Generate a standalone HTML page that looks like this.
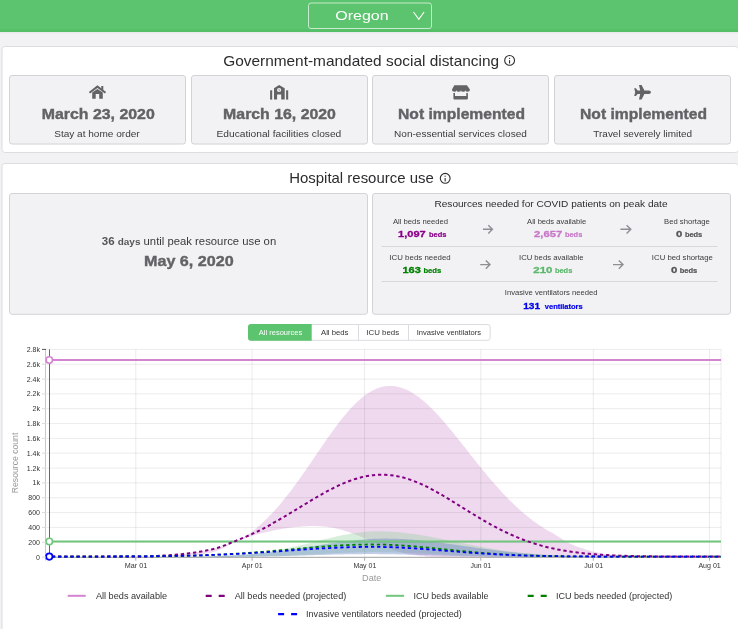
<!DOCTYPE html>
<html><head><meta charset="utf-8">
<style>
html,body{margin:0;padding:0;}
body{width:738px;height:629px;overflow:hidden;background:#f2f2f5;font-family:"Liberation Sans",sans-serif;position:relative;}
svg{position:absolute;left:0;top:0;will-change:transform;}
text{font-family:"Liberation Sans",sans-serif;}
.yt{font-size:7px;fill:#333;}
.xt{font-size:7px;fill:#333;}
.al{font-size:8.5px;fill:#999;}
.lg{font-size:9px;fill:#333;}
</style></head>
<body>
<svg width="738" height="629" viewBox="0 0 738 629">
<defs><filter id="sb" x="-5%" y="-5%" width="110%" height="110%"><feGaussianBlur stdDeviation="0.7"/></filter></defs>
<!-- header -->
<rect x="0" y="0" width="738" height="32" fill="#5cc36f"/>
<rect x="0" y="29.6" width="738" height="2.4" fill="#55bf68"/>
<rect x="0" y="32" width="738" height="1.5" fill="#000" fill-opacity="0.035"/>
<rect x="308.5" y="3" width="123" height="25.5" rx="2.5" fill="none" stroke="#c6ebcc" stroke-width="1"/>
<path d="M413.5,12 L418.8,19.3 L424.1,12" fill="none" stroke="#fff" stroke-width="1.1"/>

<!-- card 1 -->
<rect x="2" y="46.5" width="736.5" height="106" rx="3" fill="#fff" stroke="none"/><rect x="2" y="46.5" width="736.5" height="106" rx="3" fill="none" stroke="#dcdce1" filter="url(#sb)" stroke-width="1"/>
<g id="info1"><circle cx="509.6" cy="60.4" r="4.9" fill="none" stroke="#2c2c2e" stroke-width="1.1"/>
<rect x="509.0" y="60.2" width="1.1" height="3.3" fill="#2c2c2e"/><circle cx="509.55" cy="58.3" r="0.65" fill="#2c2c2e"/></g>

<rect x="9.5" y="75.5" width="176" height="68.5" rx="2.5" fill="#f2f2f5" stroke="none"/><rect x="9.5" y="75.5" width="176" height="68.5" rx="2.5" fill="none" stroke="#d2d2d7" filter="url(#sb)"/>
<rect x="191.5" y="75.5" width="176" height="68.5" rx="2.5" fill="#f2f2f5" stroke="none"/><rect x="191.5" y="75.5" width="176" height="68.5" rx="2.5" fill="none" stroke="#d2d2d7" filter="url(#sb)"/>
<rect x="372.5" y="75.5" width="176" height="68.5" rx="2.5" fill="#f2f2f5" stroke="none"/><rect x="372.5" y="75.5" width="176" height="68.5" rx="2.5" fill="none" stroke="#d2d2d7" filter="url(#sb)"/>
<rect x="554.5" y="75.5" width="176" height="68.5" rx="2.5" fill="#f2f2f5" stroke="none"/><rect x="554.5" y="75.5" width="176" height="68.5" rx="2.5" fill="none" stroke="#d2d2d7" filter="url(#sb)"/>


<!-- card 2 -->
<rect x="2" y="163.5" width="736.5" height="480" rx="3" fill="#fff" stroke="none"/><rect x="2" y="163.5" width="736.5" height="480" rx="3" fill="none" stroke="#dcdce1" filter="url(#sb)" stroke-width="1"/>
<g><circle cx="445.2" cy="178.3" r="4.9" fill="none" stroke="#2c2c2e" stroke-width="1.1"/>
<rect x="444.6" y="178.1" width="1.1" height="3.3" fill="#2c2c2e"/><circle cx="445.15" cy="176.2" r="0.65" fill="#2c2c2e"/></g>

<rect x="9.5" y="193.5" width="358" height="120.8" rx="2.5" fill="#f2f2f5" stroke="none"/><rect x="9.5" y="193.5" width="358" height="120.8" rx="2.5" fill="none" stroke="#d2d2d7" filter="url(#sb)"/>
<rect x="372.5" y="193.5" width="358" height="120.8" rx="2.5" fill="#f2f2f5" stroke="none"/><rect x="372.5" y="193.5" width="358" height="120.8" rx="2.5" fill="none" stroke="#d2d2d7" filter="url(#sb)"/>


<line x1="381.5" y1="246.5" x2="717.5" y2="246.5" stroke="#d8d8dc"/>
<line x1="381.5" y1="281.5" x2="717.5" y2="281.5" stroke="#d8d8dc"/>


<!-- icons -->
<g fill="#636366">
<path d="M89.5,92.7 L97.4,86.6 L105.5,92.7" fill="none" stroke="#636366" stroke-width="2"/>
<rect x="101.3" y="86" width="2" height="3.8"/>
<path d="M92.2,92.6 L97.4,89.0 L102.8,92.6 L102.8,98.7 L99.2,98.7 L99.2,94 L95.7,94 L95.7,98.7 L92.2,98.7 Z"/>
<rect x="270.1" y="90.3" width="2.1" height="9.3"/>
<rect x="286.1" y="90.3" width="2.1" height="9.3"/>
<path d="M274,88.2 L279.1,85.1 L284.7,88.2 L284.7,99.6 L281.2,99.6 L281.2,94.5 L277.1,94.5 L277.1,99.6 L274,99.6 Z"/>
<circle cx="279.1" cy="90" r="2.1" fill="#f2f2f5"/>
<path d="M279,88.9 L279,90.2 L279.8,90.8" fill="none" stroke="#636366" stroke-width="0.6"/>
<path d="M454.3,85.2 L466.9,85.2 L469.9,89.6 L469.9,90.0 Q469.9,91.7 467.65,91.7 Q465.4,91.7 465.4,90.2 Q465.4,91.7 463.17,91.7 Q460.95,91.7 460.95,90.2 Q460.95,91.7 458.72,91.7 Q456.5,91.7 456.5,90.2 Q456.5,91.7 454.25,91.7 Q452,91.7 452,90.0 L452,89.6 Z"/>
<path d="M453.4,93.1 L455,93.1 L455,96.1 L466.3,96.1 L466.3,93.1 L467.9,93.1 L467.9,98.6 Q467.9,99.4 467.1,99.4 L454.2,99.4 Q453.4,99.4 453.4,98.6 Z"/>
<path d="M651,92.2 Q650.7,90.5 649,90.5 L644.4,90.5 L641.6,85.0 L639.0,85.0 L640.2,90.5 L637.6,90.5 L635.9,88.3 L634.2,88.3 L635.2,92.2 L634.2,96.1 L635.9,96.1 L637.6,93.9 L640.2,93.9 L639.0,99.4 L641.6,99.4 L644.4,93.9 L649,93.9 Q650.7,93.9 651,92.2 Z"/>
</g>

<!-- right box content -->
<g fill="none" stroke="#8e8e93" stroke-width="1.4">
<path d="M483,229.3 L492.3,229.3 M488.3,225.2 L492.4,229.3 L488.3,233.4"/>
<path d="M620.4,229.3 L630.7,229.3 M626.6,225.2 L630.8,229.3 L626.6,233.4"/>
<path d="M480.2,264.6 L489.9,264.6 M485.8,260.5 L490,264.6 L485.8,268.7"/>
<path d="M613,264.6 L622.9,264.6 M618.8,260.5 L623,264.6 L618.8,268.7"/>
</g>

<!-- button group -->
<rect x="248.5" y="324.5" width="241.7" height="15.8" rx="2.5" fill="#fff" stroke="#dcdce0"/>
<path d="M251,324 L311.7,324 L311.7,340.8 L251,340.8 Q248,340.8 248,337.8 L248,327 Q248,324 251,324 Z" fill="#5cc36f"/>
<line x1="358.5" y1="324.5" x2="358.5" y2="340.3" stroke="#dcdce0"/>
<line x1="408.5" y1="324.5" x2="408.5" y2="340.3" stroke="#dcdce0"/>

<path d="M49.3,557.10 L51.3,557.10 L53.3,557.10 L55.3,557.10 L57.3,557.10 L59.3,557.10 L61.3,557.10 L63.3,557.10 L65.3,557.10 L67.3,557.10 L69.3,557.10 L71.3,557.10 L73.3,557.10 L75.3,557.09 L77.3,557.09 L79.3,557.09 L81.3,557.09 L83.3,557.09 L85.3,557.09 L87.3,557.09 L89.3,557.09 L91.3,557.09 L93.3,557.08 L95.3,557.08 L97.3,557.08 L99.3,557.08 L101.3,557.08 L103.3,557.08 L105.3,557.07 L107.3,557.07 L109.3,557.07 L111.3,557.07 L113.3,557.06 L115.3,557.06 L117.3,557.06 L119.3,557.06 L121.3,557.05 L123.3,557.05 L125.3,557.05 L127.3,557.04 L129.3,557.04 L131.3,557.04 L133.3,557.03 L135.3,557.03 L137.3,557.03 L139.3,557.02 L141.3,557.02 L143.3,557.01 L145.3,557.01 L147.3,557.01 L149.3,557.00 L151.3,556.99 L153.3,556.95 L155.3,556.89 L157.3,556.80 L159.3,556.68 L161.3,556.54 L163.3,556.39 L165.3,556.21 L167.3,556.02 L169.3,555.81 L171.3,555.59 L173.3,555.35 L175.3,555.11 L177.3,554.86 L179.3,554.60 L181.3,554.34 L183.3,554.08 L185.3,553.81 L187.3,553.55 L189.3,553.29 L191.3,553.03 L193.3,552.75 L195.3,552.46 L197.3,552.14 L199.3,551.81 L201.3,551.46 L203.3,551.09 L205.3,550.70 L207.3,550.29 L209.3,549.86 L211.3,549.40 L213.3,548.93 L215.3,548.42 L217.3,547.87 L219.3,547.28 L221.3,546.65 L223.3,545.99 L225.3,545.29 L227.3,544.55 L229.3,543.78 L231.3,542.98 L233.3,542.14 L235.3,541.27 L237.3,540.38 L239.3,539.45 L241.3,538.46 L243.3,537.37 L245.3,536.20 L247.3,534.95 L249.3,533.63 L251.3,532.26 L253.3,530.83 L255.3,529.37 L257.3,527.22 L259.3,525.53 L261.3,523.77 L263.3,521.95 L265.3,520.07 L267.3,518.13 L269.3,516.12 L271.3,514.05 L273.3,511.91 L275.3,509.72 L277.3,507.46 L279.3,505.15 L281.3,502.78 L283.3,500.35 L285.3,497.87 L287.3,495.34 L289.3,492.76 L291.3,490.13 L293.3,487.46 L295.3,484.74 L297.3,481.98 L299.3,479.19 L301.3,476.37 L303.3,473.52 L305.3,470.64 L307.3,467.75 L309.3,464.83 L311.3,461.91 L313.3,458.97 L315.3,456.03 L317.3,453.09 L319.3,450.16 L321.3,447.23 L323.3,444.32 L325.3,441.43 L327.3,438.57 L329.3,435.73 L331.3,432.93 L333.3,430.17 L335.3,427.45 L337.3,424.78 L339.3,422.17 L341.3,419.61 L343.3,417.12 L345.3,414.69 L347.3,412.34 L349.3,410.06 L351.3,407.87 L353.3,405.76 L355.3,403.74 L357.3,401.82 L359.3,399.99 L361.3,398.26 L363.3,396.63 L365.3,395.11 L367.3,393.70 L369.3,392.40 L371.3,391.22 L373.3,390.15 L375.3,389.20 L377.3,388.36 L379.3,387.65 L381.3,387.06 L383.3,386.59 L385.3,386.24 L387.3,386.01 L389.3,385.91 L391.3,385.92 L393.3,386.06 L395.3,386.30 L397.3,386.66 L399.3,387.14 L401.3,387.72 L403.3,388.41 L405.3,389.21 L407.3,390.11 L409.3,391.12 L411.3,392.22 L413.3,393.43 L415.3,394.73 L417.3,396.12 L419.3,397.60 L421.3,399.16 L423.3,400.81 L425.3,402.54 L427.3,404.34 L429.3,406.22 L431.3,408.17 L433.3,410.17 L435.3,412.25 L437.3,414.37 L439.3,416.56 L441.3,418.79 L443.3,421.07 L445.3,423.39 L447.3,425.74 L449.3,428.14 L451.3,430.56 L453.3,433.01 L455.3,435.49 L457.3,437.98 L459.3,440.49 L461.3,443.01 L463.3,445.54 L465.3,448.08 L467.3,450.62 L469.3,453.16 L471.3,455.69 L473.3,458.22 L475.3,460.74 L477.3,463.25 L479.3,465.74 L481.3,468.22 L483.3,470.67 L485.3,473.10 L487.3,475.51 L489.3,477.89 L491.3,480.25 L493.3,482.57 L495.3,484.86 L497.3,487.12 L499.3,489.34 L501.3,491.53 L503.3,493.67 L505.3,495.78 L507.3,497.85 L509.3,499.88 L511.3,501.87 L513.3,503.82 L515.3,505.72 L517.3,507.58 L519.3,509.40 L521.3,511.17 L523.3,512.90 L525.3,514.59 L527.3,516.23 L529.3,517.83 L531.3,519.38 L533.3,520.89 L535.3,522.35 L537.3,523.78 L539.3,525.15 L541.3,526.49 L543.3,527.79 L545.3,529.04 L547.3,530.25 L549.3,531.42 L551.3,532.22 L553.3,533.48 L555.3,534.76 L557.3,536.05 L559.3,537.33 L561.3,538.60 L563.3,539.84 L565.3,541.03 L567.3,542.17 L569.3,543.24 L571.3,544.23 L573.3,545.11 L575.3,545.91 L577.3,546.67 L579.3,547.41 L581.3,548.11 L583.3,548.78 L585.3,549.42 L587.3,550.03 L589.3,550.60 L591.3,551.14 L593.3,551.65 L595.3,552.12 L597.3,552.56 L599.3,552.96 L601.3,553.35 L603.3,553.73 L605.3,554.10 L607.3,554.46 L609.3,554.79 L611.3,555.09 L613.3,555.37 L615.3,555.61 L617.3,555.80 L619.3,555.96 L621.3,556.07 L623.3,556.18 L625.3,556.28 L627.3,556.38 L629.3,556.47 L631.3,556.55 L633.3,556.63 L635.3,556.70 L637.3,556.76 L639.3,556.82 L641.3,556.87 L643.3,556.91 L645.3,556.95 L647.3,556.98 L649.3,557.00 L651.3,557.01 L653.3,557.02 L655.3,557.03 L657.3,557.04 L659.3,557.05 L661.3,557.06 L663.3,557.07 L665.3,557.07 L667.3,557.08 L669.3,557.09 L671.3,557.09 L673.3,557.09 L675.3,557.10 L677.3,557.10 L679.3,557.10 L681.3,557.10 L683.3,557.10 L685.3,557.10 L687.3,557.10 L689.3,557.10 L691.3,557.10 L693.3,557.10 L695.3,557.10 L697.3,557.10 L699.3,557.10 L701.3,557.10 L703.3,557.10 L705.3,557.10 L707.3,557.10 L709.3,557.10 L711.3,557.10 L713.3,557.10 L715.3,557.10 L717.3,557.10 L719.3,557.10 L721.0,557.10 L721.0,557.10 L719.3,557.10 L717.3,557.10 L715.3,557.10 L713.3,557.10 L711.3,557.10 L709.3,557.10 L707.3,557.10 L705.3,557.10 L703.3,557.10 L701.3,557.10 L699.3,557.10 L697.3,557.10 L695.3,557.10 L693.3,557.10 L691.3,557.10 L689.3,557.10 L687.3,557.10 L685.3,557.10 L683.3,557.10 L681.3,557.10 L679.3,557.10 L677.3,557.10 L675.3,557.10 L673.3,557.10 L671.3,557.10 L669.3,557.10 L667.3,557.10 L665.3,557.10 L663.3,557.10 L661.3,557.10 L659.3,557.10 L657.3,557.10 L655.3,557.10 L653.3,557.10 L651.3,557.10 L649.3,557.10 L647.3,557.10 L645.3,557.10 L643.3,557.10 L641.3,557.10 L639.3,557.10 L637.3,557.10 L635.3,557.10 L633.3,557.10 L631.3,557.10 L629.3,557.10 L627.3,557.10 L625.3,557.10 L623.3,557.10 L621.3,557.10 L619.3,557.10 L617.3,557.10 L615.3,557.10 L613.3,557.10 L611.3,557.10 L609.3,557.10 L607.3,557.10 L605.3,557.10 L603.3,557.10 L601.3,557.10 L599.3,557.10 L597.3,557.10 L595.3,557.10 L593.3,557.10 L591.3,557.10 L589.3,557.10 L587.3,557.10 L585.3,557.10 L583.3,557.10 L581.3,557.10 L579.3,557.10 L577.3,557.10 L575.3,557.10 L573.3,557.10 L571.3,557.10 L569.3,557.10 L567.3,557.10 L565.3,557.10 L563.3,557.10 L561.3,557.10 L559.3,557.10 L557.3,557.10 L555.3,557.10 L553.3,557.10 L551.3,557.10 L549.3,557.10 L547.3,557.10 L545.3,557.10 L543.3,557.10 L541.3,557.10 L539.3,557.10 L537.3,557.10 L535.3,557.10 L533.3,557.10 L531.3,557.10 L529.3,557.10 L527.3,557.10 L525.3,557.10 L523.3,557.10 L521.3,557.10 L519.3,557.10 L517.3,557.10 L515.3,557.10 L513.3,557.10 L511.3,557.10 L509.3,557.10 L507.3,557.10 L505.3,557.10 L503.3,557.10 L501.3,557.10 L499.3,557.10 L497.3,557.10 L495.3,557.10 L493.3,557.10 L491.3,557.10 L489.3,557.10 L487.3,557.10 L485.3,557.10 L483.3,557.10 L481.3,557.10 L479.3,557.10 L477.3,557.10 L475.3,557.10 L473.3,557.10 L471.3,557.10 L469.3,557.10 L467.3,557.10 L465.3,557.10 L463.3,557.10 L461.3,557.09 L459.3,557.09 L457.3,557.09 L455.3,557.08 L453.3,557.07 L451.3,557.06 L449.3,557.05 L447.3,557.03 L445.3,557.01 L443.3,556.99 L441.3,556.95 L439.3,556.91 L437.3,556.86 L435.3,556.80 L433.3,556.73 L431.3,556.64 L429.3,556.54 L427.3,556.42 L425.3,556.28 L423.3,556.11 L421.3,555.93 L419.3,555.72 L417.3,555.48 L415.3,555.21 L413.3,554.91 L411.3,554.58 L409.3,554.21 L407.3,553.81 L405.3,553.38 L403.3,552.91 L401.3,552.40 L399.3,551.86 L397.3,551.28 L395.3,550.66 L393.3,550.01 L391.3,549.33 L389.3,548.62 L387.3,547.88 L385.3,547.11 L383.3,546.32 L381.3,545.51 L379.3,544.68 L377.3,543.83 L375.3,542.97 L373.3,542.10 L371.3,541.23 L369.3,540.35 L367.3,539.48 L365.3,538.61 L363.3,537.75 L361.3,536.90 L359.3,536.07 L357.3,535.26 L355.3,534.47 L353.3,533.70 L351.3,532.96 L349.3,532.25 L347.3,531.57 L345.3,530.92 L343.3,530.32 L341.3,529.74 L339.3,529.21 L337.3,528.72 L335.3,528.26 L333.3,527.85 L331.3,527.48 L329.3,527.15 L327.3,526.86 L325.3,526.62 L323.3,526.42 L321.3,526.25 L319.3,526.13 L317.3,526.05 L315.3,526.01 L313.3,526.00 L311.3,526.02 L309.3,526.07 L307.3,526.13 L305.3,526.23 L303.3,526.34 L301.3,526.48 L299.3,526.64 L297.3,526.83 L295.3,527.03 L293.3,527.26 L291.3,527.51 L289.3,527.78 L287.3,528.07 L285.3,528.38 L283.3,528.70 L281.3,529.05 L279.3,529.41 L277.3,529.79 L275.3,530.18 L273.3,530.59 L271.3,531.02 L269.3,531.45 L267.3,531.90 L265.3,532.36 L263.3,532.83 L261.3,533.31 L259.3,533.80 L257.3,534.29 L255.3,534.99 L253.3,535.56 L251.3,536.16 L249.3,536.78 L247.3,537.43 L245.3,538.09 L243.3,538.78 L241.3,539.50 L239.3,540.23 L237.3,540.99 L235.3,541.78 L233.3,542.68 L231.3,543.68 L229.3,544.75 L227.3,545.86 L225.3,546.97 L223.3,548.05 L221.3,549.07 L219.3,549.99 L217.3,550.79 L215.3,551.42 L213.3,551.93 L211.3,552.42 L209.3,552.88 L207.3,553.32 L205.3,553.74 L203.3,554.12 L201.3,554.48 L199.3,554.80 L197.3,555.09 L195.3,555.34 L193.3,555.55 L191.3,555.72 L189.3,555.84 L187.3,555.95 L185.3,556.06 L183.3,556.17 L181.3,556.27 L179.3,556.36 L177.3,556.45 L175.3,556.54 L173.3,556.62 L171.3,556.69 L169.3,556.76 L167.3,556.83 L165.3,556.88 L163.3,556.93 L161.3,556.98 L159.3,557.02 L157.3,557.05 L155.3,557.07 L153.3,557.09 L151.3,557.10 L149.3,557.10 L147.3,557.10 L145.3,557.10 L143.3,557.10 L141.3,557.10 L139.3,557.10 L137.3,557.10 L135.3,557.10 L133.3,557.10 L131.3,557.10 L129.3,557.10 L127.3,557.10 L125.3,557.10 L123.3,557.10 L121.3,557.10 L119.3,557.10 L117.3,557.10 L115.3,557.10 L113.3,557.10 L111.3,557.10 L109.3,557.10 L107.3,557.10 L105.3,557.10 L103.3,557.10 L101.3,557.10 L99.3,557.10 L97.3,557.10 L95.3,557.10 L93.3,557.10 L91.3,557.10 L89.3,557.10 L87.3,557.10 L85.3,557.10 L83.3,557.10 L81.3,557.10 L79.3,557.10 L77.3,557.10 L75.3,557.10 L73.3,557.10 L71.3,557.10 L69.3,557.10 L67.3,557.10 L65.3,557.10 L63.3,557.10 L61.3,557.10 L59.3,557.10 L57.3,557.10 L55.3,557.10 L53.3,557.10 L51.3,557.10 L49.3,557.10 Z" fill="#d090cc" fill-opacity="0.34"/>
<path d="M49.3,557.10 L51.3,557.10 L53.3,557.10 L55.3,557.10 L57.3,557.10 L59.3,557.10 L61.3,557.10 L63.3,557.10 L65.3,557.10 L67.3,557.10 L69.3,557.10 L71.3,557.10 L73.3,557.10 L75.3,557.10 L77.3,557.10 L79.3,557.10 L81.3,557.10 L83.3,557.10 L85.3,557.10 L87.3,557.10 L89.3,557.10 L91.3,557.10 L93.3,557.10 L95.3,557.10 L97.3,557.10 L99.3,557.10 L101.3,557.10 L103.3,557.10 L105.3,557.10 L107.3,557.10 L109.3,557.10 L111.3,557.10 L113.3,557.10 L115.3,557.10 L117.3,557.10 L119.3,557.10 L121.3,557.10 L123.3,557.09 L125.3,557.09 L127.3,557.09 L129.3,557.09 L131.3,557.09 L133.3,557.09 L135.3,557.09 L137.3,557.09 L139.3,557.08 L141.3,557.08 L143.3,557.08 L145.3,557.08 L147.3,557.07 L149.3,557.07 L151.3,557.07 L153.3,557.06 L155.3,557.06 L157.3,557.05 L159.3,557.05 L161.3,557.04 L163.3,557.04 L165.3,557.03 L167.3,557.02 L169.3,557.01 L171.3,557.00 L173.3,556.99 L175.3,556.98 L177.3,556.96 L179.3,556.95 L181.3,556.93 L183.3,556.91 L185.3,556.89 L187.3,556.87 L189.3,556.85 L191.3,556.82 L193.3,556.79 L195.3,556.76 L197.3,556.73 L199.3,556.69 L201.3,556.66 L203.3,556.61 L205.3,556.57 L207.3,556.52 L209.3,556.46 L211.3,556.41 L213.3,556.34 L215.3,556.28 L217.3,556.20 L219.3,556.13 L221.3,556.04 L223.3,555.95 L225.3,555.86 L227.3,555.76 L229.3,555.65 L231.3,555.53 L233.3,555.41 L235.3,555.27 L237.3,555.14 L239.3,554.99 L241.3,554.83 L243.3,554.66 L245.3,554.49 L247.3,554.30 L249.3,554.11 L251.3,553.90 L253.3,553.69 L255.3,553.46 L257.3,553.22 L259.3,552.97 L261.3,552.71 L263.3,552.44 L265.3,552.16 L267.3,551.86 L269.3,551.55 L271.3,551.23 L273.3,550.90 L275.3,550.56 L277.3,550.20 L279.3,549.83 L281.3,549.45 L283.3,549.06 L285.3,548.66 L287.3,548.25 L289.3,547.83 L291.3,547.40 L293.3,546.95 L295.3,546.50 L297.3,546.04 L299.3,545.57 L301.3,545.10 L303.3,544.61 L305.3,544.13 L307.3,543.63 L309.3,543.14 L311.3,542.64 L313.3,542.13 L315.3,541.63 L317.3,541.12 L319.3,540.62 L321.3,540.12 L323.3,539.62 L325.3,539.12 L327.3,538.63 L329.3,538.15 L331.3,537.67 L333.3,537.20 L335.3,536.75 L337.3,536.30 L339.3,535.87 L341.3,535.45 L343.3,535.04 L345.3,534.65 L347.3,534.28 L349.3,533.92 L351.3,533.58 L353.3,533.27 L355.3,532.97 L357.3,532.70 L359.3,532.45 L361.3,532.22 L363.3,532.02 L365.3,531.84 L367.3,531.68 L369.3,531.55 L371.3,531.45 L373.3,531.37 L375.3,531.32 L377.3,531.30 L379.3,531.30 L381.3,531.32 L383.3,531.36 L385.3,531.42 L387.3,531.49 L389.3,531.58 L391.3,531.69 L393.3,531.82 L395.3,531.96 L397.3,532.12 L399.3,532.29 L401.3,532.48 L403.3,532.69 L405.3,532.91 L407.3,533.15 L409.3,533.40 L411.3,533.66 L413.3,533.94 L415.3,534.23 L417.3,534.53 L419.3,534.84 L421.3,535.17 L423.3,535.50 L425.3,535.84 L427.3,536.20 L429.3,536.56 L431.3,536.92 L433.3,537.30 L435.3,537.68 L437.3,538.07 L439.3,538.46 L441.3,538.86 L443.3,539.26 L445.3,539.67 L447.3,540.08 L449.3,540.49 L451.3,540.90 L453.3,541.31 L455.3,541.72 L457.3,542.13 L459.3,542.54 L461.3,542.95 L463.3,543.36 L465.3,543.76 L467.3,544.16 L469.3,544.56 L471.3,544.96 L473.3,545.35 L475.3,545.73 L477.3,546.11 L479.3,546.49 L481.3,546.86 L483.3,547.22 L485.3,547.58 L487.3,547.93 L489.3,548.27 L491.3,548.61 L493.3,548.94 L495.3,549.26 L497.3,549.57 L499.3,549.88 L501.3,550.18 L503.3,550.47 L505.3,550.76 L507.3,551.03 L509.3,551.30 L511.3,551.56 L513.3,551.81 L515.3,552.05 L517.3,552.29 L519.3,552.52 L521.3,552.74 L523.3,552.95 L525.3,553.16 L527.3,553.35 L529.3,553.54 L531.3,553.73 L533.3,553.90 L535.3,554.07 L537.3,554.23 L539.3,554.39 L541.3,554.54 L543.3,554.68 L545.3,554.81 L547.3,554.94 L549.3,555.07 L551.3,555.18 L553.3,555.30 L555.3,555.40 L557.3,555.50 L559.3,555.60 L561.3,555.69 L563.3,555.78 L565.3,555.86 L567.3,555.94 L569.3,556.01 L571.3,556.08 L573.3,556.15 L575.3,556.21 L577.3,556.27 L579.3,556.33 L581.3,556.38 L583.3,556.43 L585.3,556.47 L587.3,556.52 L589.3,556.56 L591.3,556.60 L593.3,556.63 L595.3,556.67 L597.3,556.70 L599.3,556.73 L601.3,556.76 L603.3,556.78 L605.3,556.81 L607.3,556.83 L609.3,556.85 L611.3,556.87 L613.3,556.89 L615.3,556.90 L617.3,556.92 L619.3,556.93 L621.3,556.95 L623.3,556.96 L625.3,556.97 L627.3,556.98 L629.3,556.99 L631.3,557.00 L633.3,557.01 L635.3,557.02 L637.3,557.02 L639.3,557.03 L641.3,557.04 L643.3,557.04 L645.3,557.05 L647.3,557.05 L649.3,557.06 L651.3,557.06 L653.3,557.06 L655.3,557.07 L657.3,557.07 L659.3,557.07 L661.3,557.08 L663.3,557.08 L665.3,557.08 L667.3,557.08 L669.3,557.08 L671.3,557.08 L673.3,557.09 L675.3,557.09 L677.3,557.09 L679.3,557.09 L681.3,557.09 L683.3,557.09 L685.3,557.09 L687.3,557.09 L689.3,557.09 L691.3,557.09 L693.3,557.10 L695.3,557.10 L697.3,557.10 L699.3,557.10 L701.3,557.10 L703.3,557.10 L705.3,557.10 L707.3,557.10 L709.3,557.10 L711.3,557.10 L713.3,557.10 L715.3,557.10 L717.3,557.10 L719.3,557.10 L721.0,557.10 L721.0,557.10 L719.3,557.10 L717.3,557.10 L715.3,557.10 L713.3,557.10 L711.3,557.10 L709.3,557.10 L707.3,557.10 L705.3,557.10 L703.3,557.10 L701.3,557.10 L699.3,557.10 L697.3,557.10 L695.3,557.10 L693.3,557.10 L691.3,557.10 L689.3,557.10 L687.3,557.10 L685.3,557.10 L683.3,557.10 L681.3,557.10 L679.3,557.10 L677.3,557.10 L675.3,557.10 L673.3,557.10 L671.3,557.10 L669.3,557.10 L667.3,557.10 L665.3,557.10 L663.3,557.10 L661.3,557.10 L659.3,557.10 L657.3,557.10 L655.3,557.10 L653.3,557.10 L651.3,557.10 L649.3,557.10 L647.3,557.10 L645.3,557.10 L643.3,557.10 L641.3,557.10 L639.3,557.10 L637.3,557.10 L635.3,557.10 L633.3,557.10 L631.3,557.10 L629.3,557.10 L627.3,557.10 L625.3,557.10 L623.3,557.10 L621.3,557.10 L619.3,557.10 L617.3,557.10 L615.3,557.10 L613.3,557.10 L611.3,557.10 L609.3,557.10 L607.3,557.10 L605.3,557.10 L603.3,557.10 L601.3,557.10 L599.3,557.10 L597.3,557.09 L595.3,557.09 L593.3,557.09 L591.3,557.09 L589.3,557.09 L587.3,557.09 L585.3,557.09 L583.3,557.09 L581.3,557.09 L579.3,557.08 L577.3,557.08 L575.3,557.08 L573.3,557.08 L571.3,557.08 L569.3,557.07 L567.3,557.07 L565.3,557.07 L563.3,557.06 L561.3,557.06 L559.3,557.06 L557.3,557.05 L555.3,557.05 L553.3,557.04 L551.3,557.03 L549.3,557.03 L547.3,557.02 L545.3,557.01 L543.3,557.00 L541.3,556.99 L539.3,556.98 L537.3,556.97 L535.3,556.96 L533.3,556.95 L531.3,556.93 L529.3,556.92 L527.3,556.90 L525.3,556.88 L523.3,556.86 L521.3,556.84 L519.3,556.82 L517.3,556.80 L515.3,556.78 L513.3,556.75 L511.3,556.72 L509.3,556.69 L507.3,556.66 L505.3,556.63 L503.3,556.59 L501.3,556.55 L499.3,556.52 L497.3,556.47 L495.3,556.43 L493.3,556.38 L491.3,556.34 L489.3,556.29 L487.3,556.23 L485.3,556.18 L483.3,556.12 L481.3,556.06 L479.3,556.00 L477.3,555.93 L475.3,555.86 L473.3,555.79 L471.3,555.72 L469.3,555.65 L467.3,555.57 L465.3,555.49 L463.3,555.41 L461.3,555.32 L459.3,555.24 L457.3,555.15 L455.3,555.06 L453.3,554.97 L451.3,554.87 L449.3,554.78 L447.3,554.68 L445.3,554.58 L443.3,554.48 L441.3,554.38 L439.3,554.28 L437.3,554.18 L435.3,554.08 L433.3,553.98 L431.3,553.88 L429.3,553.78 L427.3,553.68 L425.3,553.58 L423.3,553.48 L421.3,553.39 L419.3,553.29 L417.3,553.20 L415.3,553.11 L413.3,553.02 L411.3,552.94 L409.3,552.85 L407.3,552.77 L405.3,552.70 L403.3,552.63 L401.3,552.56 L399.3,552.49 L397.3,552.43 L395.3,552.38 L393.3,552.33 L391.3,552.28 L389.3,552.24 L387.3,552.20 L385.3,552.17 L383.3,552.15 L381.3,552.13 L379.3,552.11 L377.3,552.10 L375.3,552.10 L373.3,552.10 L371.3,552.11 L369.3,552.13 L367.3,552.15 L365.3,552.18 L363.3,552.21 L361.3,552.25 L359.3,552.30 L357.3,552.35 L355.3,552.41 L353.3,552.47 L351.3,552.54 L349.3,552.62 L347.3,552.70 L345.3,552.78 L343.3,552.87 L341.3,552.96 L339.3,553.05 L337.3,553.15 L335.3,553.25 L333.3,553.35 L331.3,553.45 L329.3,553.56 L327.3,553.67 L325.3,553.78 L323.3,553.89 L321.3,554.00 L319.3,554.11 L317.3,554.22 L315.3,554.33 L313.3,554.44 L311.3,554.54 L309.3,554.65 L307.3,554.76 L305.3,554.86 L303.3,554.96 L301.3,555.06 L299.3,555.16 L297.3,555.26 L295.3,555.35 L293.3,555.44 L291.3,555.53 L289.3,555.61 L287.3,555.70 L285.3,555.78 L283.3,555.85 L281.3,555.93 L279.3,556.00 L277.3,556.07 L275.3,556.13 L273.3,556.20 L271.3,556.25 L269.3,556.31 L267.3,556.36 L265.3,556.42 L263.3,556.46 L261.3,556.51 L259.3,556.55 L257.3,556.59 L255.3,556.63 L253.3,556.67 L251.3,556.70 L249.3,556.73 L247.3,556.76 L245.3,556.79 L243.3,556.82 L241.3,556.84 L239.3,556.86 L237.3,556.88 L235.3,556.90 L233.3,556.92 L231.3,556.94 L229.3,556.95 L227.3,556.96 L225.3,556.98 L223.3,556.99 L221.3,557.00 L219.3,557.01 L217.3,557.02 L215.3,557.03 L213.3,557.03 L211.3,557.04 L209.3,557.05 L207.3,557.05 L205.3,557.06 L203.3,557.06 L201.3,557.07 L199.3,557.07 L197.3,557.07 L195.3,557.08 L193.3,557.08 L191.3,557.08 L189.3,557.08 L187.3,557.09 L185.3,557.09 L183.3,557.09 L181.3,557.09 L179.3,557.09 L177.3,557.09 L175.3,557.09 L173.3,557.09 L171.3,557.09 L169.3,557.10 L167.3,557.10 L165.3,557.10 L163.3,557.10 L161.3,557.10 L159.3,557.10 L157.3,557.10 L155.3,557.10 L153.3,557.10 L151.3,557.10 L149.3,557.10 L147.3,557.10 L145.3,557.10 L143.3,557.10 L141.3,557.10 L139.3,557.10 L137.3,557.10 L135.3,557.10 L133.3,557.10 L131.3,557.10 L129.3,557.10 L127.3,557.10 L125.3,557.10 L123.3,557.10 L121.3,557.10 L119.3,557.10 L117.3,557.10 L115.3,557.10 L113.3,557.10 L111.3,557.10 L109.3,557.10 L107.3,557.10 L105.3,557.10 L103.3,557.10 L101.3,557.10 L99.3,557.10 L97.3,557.10 L95.3,557.10 L93.3,557.10 L91.3,557.10 L89.3,557.10 L87.3,557.10 L85.3,557.10 L83.3,557.10 L81.3,557.10 L79.3,557.10 L77.3,557.10 L75.3,557.10 L73.3,557.10 L71.3,557.10 L69.3,557.10 L67.3,557.10 L65.3,557.10 L63.3,557.10 L61.3,557.10 L59.3,557.10 L57.3,557.10 L55.3,557.10 L53.3,557.10 L51.3,557.10 L49.3,557.10 Z" fill="#8fcf9a" fill-opacity="0.35"/>
<path d="M49.3,557.10 L51.3,557.10 L53.3,557.10 L55.3,557.10 L57.3,557.10 L59.3,557.10 L61.3,557.10 L63.3,557.10 L65.3,557.10 L67.3,557.10 L69.3,557.10 L71.3,557.10 L73.3,557.10 L75.3,557.10 L77.3,557.10 L79.3,557.10 L81.3,557.10 L83.3,557.10 L85.3,557.10 L87.3,557.10 L89.3,557.10 L91.3,557.10 L93.3,557.10 L95.3,557.10 L97.3,557.10 L99.3,557.10 L101.3,557.09 L103.3,557.09 L105.3,557.09 L107.3,557.09 L109.3,557.09 L111.3,557.09 L113.3,557.09 L115.3,557.09 L117.3,557.09 L119.3,557.09 L121.3,557.08 L123.3,557.08 L125.3,557.08 L127.3,557.08 L129.3,557.08 L131.3,557.07 L133.3,557.07 L135.3,557.07 L137.3,557.06 L139.3,557.06 L141.3,557.06 L143.3,557.05 L145.3,557.05 L147.3,557.04 L149.3,557.04 L151.3,557.03 L153.3,557.02 L155.3,557.02 L157.3,557.01 L159.3,557.00 L161.3,556.99 L163.3,556.98 L165.3,556.97 L167.3,556.95 L169.3,556.94 L171.3,556.92 L173.3,556.91 L175.3,556.89 L177.3,556.87 L179.3,556.85 L181.3,556.83 L183.3,556.81 L185.3,556.78 L187.3,556.76 L189.3,556.73 L191.3,556.70 L193.3,556.66 L195.3,556.63 L197.3,556.59 L199.3,556.55 L201.3,556.51 L203.3,556.46 L205.3,556.41 L207.3,556.36 L209.3,556.31 L211.3,556.25 L213.3,556.19 L215.3,556.12 L217.3,556.05 L219.3,555.98 L221.3,555.90 L223.3,555.82 L225.3,555.73 L227.3,555.64 L229.3,555.54 L231.3,555.44 L233.3,555.33 L235.3,555.22 L237.3,555.10 L239.3,554.98 L241.3,554.85 L243.3,554.72 L245.3,554.57 L247.3,554.43 L249.3,554.27 L251.3,554.11 L253.3,553.95 L255.3,553.78 L257.3,553.60 L259.3,553.41 L261.3,553.22 L263.3,553.02 L265.3,552.81 L267.3,552.60 L269.3,552.38 L271.3,552.15 L273.3,551.92 L275.3,551.68 L277.3,551.44 L279.3,551.18 L281.3,550.93 L283.3,550.66 L285.3,550.39 L287.3,550.12 L289.3,549.83 L291.3,549.55 L293.3,549.26 L295.3,548.96 L297.3,548.66 L299.3,548.36 L301.3,548.05 L303.3,547.74 L305.3,547.42 L307.3,547.11 L309.3,546.79 L311.3,546.47 L313.3,546.15 L315.3,545.83 L317.3,545.51 L319.3,545.19 L321.3,544.87 L323.3,544.56 L325.3,544.24 L327.3,543.93 L329.3,543.62 L331.3,543.32 L333.3,543.02 L335.3,542.72 L337.3,542.43 L339.3,542.15 L341.3,541.88 L343.3,541.61 L345.3,541.35 L347.3,541.10 L349.3,540.86 L351.3,540.62 L353.3,540.40 L355.3,540.19 L357.3,539.99 L359.3,539.81 L361.3,539.63 L363.3,539.47 L365.3,539.32 L367.3,539.18 L369.3,539.06 L371.3,538.95 L373.3,538.86 L375.3,538.78 L377.3,538.71 L379.3,538.66 L381.3,538.63 L383.3,538.61 L385.3,538.60 L387.3,538.61 L389.3,538.63 L391.3,538.66 L393.3,538.70 L395.3,538.76 L397.3,538.83 L399.3,538.91 L401.3,539.00 L403.3,539.10 L405.3,539.22 L407.3,539.34 L409.3,539.48 L411.3,539.62 L413.3,539.78 L415.3,539.94 L417.3,540.12 L419.3,540.30 L421.3,540.50 L423.3,540.70 L425.3,540.91 L427.3,541.13 L429.3,541.36 L431.3,541.59 L433.3,541.83 L435.3,542.07 L437.3,542.32 L439.3,542.58 L441.3,542.84 L443.3,543.11 L445.3,543.38 L447.3,543.65 L449.3,543.93 L451.3,544.21 L453.3,544.49 L455.3,544.78 L457.3,545.06 L459.3,545.35 L461.3,545.63 L463.3,545.92 L465.3,546.21 L467.3,546.50 L469.3,546.78 L471.3,547.07 L473.3,547.35 L475.3,547.63 L477.3,547.91 L479.3,548.19 L481.3,548.47 L483.3,548.74 L485.3,549.01 L487.3,549.27 L489.3,549.53 L491.3,549.79 L493.3,550.04 L495.3,550.29 L497.3,550.54 L499.3,550.78 L501.3,551.01 L503.3,551.24 L505.3,551.47 L507.3,551.69 L509.3,551.90 L511.3,552.11 L513.3,552.32 L515.3,552.52 L517.3,552.71 L519.3,552.90 L521.3,553.08 L523.3,553.26 L525.3,553.43 L527.3,553.60 L529.3,553.76 L531.3,553.91 L533.3,554.06 L535.3,554.21 L537.3,554.35 L539.3,554.49 L541.3,554.62 L543.3,554.74 L545.3,554.86 L547.3,554.98 L549.3,555.09 L551.3,555.19 L553.3,555.30 L555.3,555.39 L557.3,555.49 L559.3,555.58 L561.3,555.66 L563.3,555.74 L565.3,555.82 L567.3,555.89 L569.3,555.97 L571.3,556.03 L573.3,556.10 L575.3,556.16 L577.3,556.21 L579.3,556.27 L581.3,556.32 L583.3,556.37 L585.3,556.42 L587.3,556.46 L589.3,556.50 L591.3,556.54 L593.3,556.58 L595.3,556.61 L597.3,556.64 L599.3,556.68 L601.3,556.70 L603.3,556.73 L605.3,556.76 L607.3,556.78 L609.3,556.80 L611.3,556.82 L613.3,556.84 L615.3,556.86 L617.3,556.88 L619.3,556.90 L621.3,556.91 L623.3,556.93 L625.3,556.94 L627.3,556.95 L629.3,556.96 L631.3,556.97 L633.3,556.98 L635.3,556.99 L637.3,557.00 L639.3,557.01 L641.3,557.02 L643.3,557.02 L645.3,557.03 L647.3,557.04 L649.3,557.04 L651.3,557.05 L653.3,557.05 L655.3,557.05 L657.3,557.06 L659.3,557.06 L661.3,557.07 L663.3,557.07 L665.3,557.07 L667.3,557.07 L669.3,557.08 L671.3,557.08 L673.3,557.08 L675.3,557.08 L677.3,557.08 L679.3,557.09 L681.3,557.09 L683.3,557.09 L685.3,557.09 L687.3,557.09 L689.3,557.09 L691.3,557.09 L693.3,557.09 L695.3,557.09 L697.3,557.09 L699.3,557.09 L701.3,557.10 L703.3,557.10 L705.3,557.10 L707.3,557.10 L709.3,557.10 L711.3,557.10 L713.3,557.10 L715.3,557.10 L717.3,557.10 L719.3,557.10 L721.0,557.10 L721.0,557.10 L719.3,557.10 L717.3,557.10 L715.3,557.10 L713.3,557.10 L711.3,557.10 L709.3,557.10 L707.3,557.10 L705.3,557.10 L703.3,557.10 L701.3,557.10 L699.3,557.10 L697.3,557.10 L695.3,557.10 L693.3,557.10 L691.3,557.10 L689.3,557.10 L687.3,557.10 L685.3,557.10 L683.3,557.10 L681.3,557.10 L679.3,557.10 L677.3,557.10 L675.3,557.10 L673.3,557.10 L671.3,557.10 L669.3,557.10 L667.3,557.10 L665.3,557.10 L663.3,557.10 L661.3,557.10 L659.3,557.10 L657.3,557.10 L655.3,557.10 L653.3,557.10 L651.3,557.10 L649.3,557.10 L647.3,557.10 L645.3,557.10 L643.3,557.10 L641.3,557.10 L639.3,557.10 L637.3,557.10 L635.3,557.10 L633.3,557.10 L631.3,557.10 L629.3,557.10 L627.3,557.10 L625.3,557.10 L623.3,557.10 L621.3,557.10 L619.3,557.10 L617.3,557.10 L615.3,557.10 L613.3,557.10 L611.3,557.10 L609.3,557.10 L607.3,557.10 L605.3,557.10 L603.3,557.10 L601.3,557.10 L599.3,557.10 L597.3,557.10 L595.3,557.10 L593.3,557.10 L591.3,557.10 L589.3,557.10 L587.3,557.10 L585.3,557.10 L583.3,557.09 L581.3,557.09 L579.3,557.09 L577.3,557.09 L575.3,557.09 L573.3,557.09 L571.3,557.09 L569.3,557.09 L567.3,557.09 L565.3,557.08 L563.3,557.08 L561.3,557.08 L559.3,557.08 L557.3,557.08 L555.3,557.07 L553.3,557.07 L551.3,557.07 L549.3,557.07 L547.3,557.06 L545.3,557.06 L543.3,557.05 L541.3,557.05 L539.3,557.04 L537.3,557.04 L535.3,557.03 L533.3,557.03 L531.3,557.02 L529.3,557.01 L527.3,557.00 L525.3,556.99 L523.3,556.99 L521.3,556.98 L519.3,556.96 L517.3,556.95 L515.3,556.94 L513.3,556.93 L511.3,556.91 L509.3,556.90 L507.3,556.88 L505.3,556.86 L503.3,556.85 L501.3,556.83 L499.3,556.81 L497.3,556.78 L495.3,556.76 L493.3,556.74 L491.3,556.71 L489.3,556.68 L487.3,556.66 L485.3,556.63 L483.3,556.60 L481.3,556.56 L479.3,556.53 L477.3,556.49 L475.3,556.46 L473.3,556.42 L471.3,556.38 L469.3,556.34 L467.3,556.29 L465.3,556.25 L463.3,556.20 L461.3,556.16 L459.3,556.11 L457.3,556.06 L455.3,556.01 L453.3,555.96 L451.3,555.90 L449.3,555.85 L447.3,555.79 L445.3,555.74 L443.3,555.68 L441.3,555.62 L439.3,555.56 L437.3,555.50 L435.3,555.44 L433.3,555.38 L431.3,555.32 L429.3,555.26 L427.3,555.20 L425.3,555.14 L423.3,555.08 L421.3,555.02 L419.3,554.96 L417.3,554.90 L415.3,554.84 L413.3,554.79 L411.3,554.73 L409.3,554.68 L407.3,554.63 L405.3,554.58 L403.3,554.53 L401.3,554.48 L399.3,554.44 L397.3,554.40 L395.3,554.36 L393.3,554.32 L391.3,554.28 L389.3,554.25 L387.3,554.22 L385.3,554.20 L383.3,554.17 L381.3,554.15 L379.3,554.14 L377.3,554.12 L375.3,554.11 L373.3,554.10 L371.3,554.10 L369.3,554.10 L367.3,554.10 L365.3,554.11 L363.3,554.12 L361.3,554.13 L359.3,554.15 L357.3,554.17 L355.3,554.19 L353.3,554.21 L351.3,554.24 L349.3,554.27 L347.3,554.31 L345.3,554.34 L343.3,554.38 L341.3,554.42 L339.3,554.47 L337.3,554.51 L335.3,554.56 L333.3,554.61 L331.3,554.66 L329.3,554.72 L327.3,554.77 L325.3,554.83 L323.3,554.88 L321.3,554.94 L319.3,555.00 L317.3,555.06 L315.3,555.12 L313.3,555.18 L311.3,555.24 L309.3,555.30 L307.3,555.36 L305.3,555.42 L303.3,555.48 L301.3,555.54 L299.3,555.60 L297.3,555.66 L295.3,555.72 L293.3,555.77 L291.3,555.83 L289.3,555.89 L287.3,555.94 L285.3,555.99 L283.3,556.04 L281.3,556.09 L279.3,556.14 L277.3,556.19 L275.3,556.24 L273.3,556.28 L271.3,556.32 L269.3,556.37 L267.3,556.41 L265.3,556.45 L263.3,556.48 L261.3,556.52 L259.3,556.55 L257.3,556.59 L255.3,556.62 L253.3,556.65 L251.3,556.68 L249.3,556.70 L247.3,556.73 L245.3,556.75 L243.3,556.78 L241.3,556.80 L239.3,556.82 L237.3,556.84 L235.3,556.86 L233.3,556.88 L231.3,556.89 L229.3,556.91 L227.3,556.92 L225.3,556.94 L223.3,556.95 L221.3,556.96 L219.3,556.97 L217.3,556.98 L215.3,556.99 L213.3,557.00 L211.3,557.01 L209.3,557.02 L207.3,557.02 L205.3,557.03 L203.3,557.04 L201.3,557.04 L199.3,557.05 L197.3,557.05 L195.3,557.06 L193.3,557.06 L191.3,557.06 L189.3,557.07 L187.3,557.07 L185.3,557.07 L183.3,557.08 L181.3,557.08 L179.3,557.08 L177.3,557.08 L175.3,557.08 L173.3,557.09 L171.3,557.09 L169.3,557.09 L167.3,557.09 L165.3,557.09 L163.3,557.09 L161.3,557.09 L159.3,557.09 L157.3,557.09 L155.3,557.10 L153.3,557.10 L151.3,557.10 L149.3,557.10 L147.3,557.10 L145.3,557.10 L143.3,557.10 L141.3,557.10 L139.3,557.10 L137.3,557.10 L135.3,557.10 L133.3,557.10 L131.3,557.10 L129.3,557.10 L127.3,557.10 L125.3,557.10 L123.3,557.10 L121.3,557.10 L119.3,557.10 L117.3,557.10 L115.3,557.10 L113.3,557.10 L111.3,557.10 L109.3,557.10 L107.3,557.10 L105.3,557.10 L103.3,557.10 L101.3,557.10 L99.3,557.10 L97.3,557.10 L95.3,557.10 L93.3,557.10 L91.3,557.10 L89.3,557.10 L87.3,557.10 L85.3,557.10 L83.3,557.10 L81.3,557.10 L79.3,557.10 L77.3,557.10 L75.3,557.10 L73.3,557.10 L71.3,557.10 L69.3,557.10 L67.3,557.10 L65.3,557.10 L63.3,557.10 L61.3,557.10 L59.3,557.10 L57.3,557.10 L55.3,557.10 L53.3,557.10 L51.3,557.10 L49.3,557.10 Z" fill="#6a86c8" fill-opacity="0.42"/>
<line x1="46" y1="557.1" x2="721.0" y2="557.1" stroke="#000" stroke-opacity="0.08" stroke-width="1"/>
<line x1="46" y1="542.3" x2="721.0" y2="542.3" stroke="#000" stroke-opacity="0.08" stroke-width="1"/>
<line x1="46" y1="527.4" x2="721.0" y2="527.4" stroke="#000" stroke-opacity="0.08" stroke-width="1"/>
<line x1="46" y1="512.6" x2="721.0" y2="512.6" stroke="#000" stroke-opacity="0.08" stroke-width="1"/>
<line x1="46" y1="497.8" x2="721.0" y2="497.8" stroke="#000" stroke-opacity="0.08" stroke-width="1"/>
<line x1="46" y1="482.9" x2="721.0" y2="482.9" stroke="#000" stroke-opacity="0.08" stroke-width="1"/>
<line x1="46" y1="468.1" x2="721.0" y2="468.1" stroke="#000" stroke-opacity="0.08" stroke-width="1"/>
<line x1="46" y1="453.2" x2="721.0" y2="453.2" stroke="#000" stroke-opacity="0.08" stroke-width="1"/>
<line x1="46" y1="438.4" x2="721.0" y2="438.4" stroke="#000" stroke-opacity="0.08" stroke-width="1"/>
<line x1="46" y1="423.6" x2="721.0" y2="423.6" stroke="#000" stroke-opacity="0.08" stroke-width="1"/>
<line x1="46" y1="408.7" x2="721.0" y2="408.7" stroke="#000" stroke-opacity="0.08" stroke-width="1"/>
<line x1="46" y1="393.9" x2="721.0" y2="393.9" stroke="#000" stroke-opacity="0.08" stroke-width="1"/>
<line x1="46" y1="379.1" x2="721.0" y2="379.1" stroke="#000" stroke-opacity="0.08" stroke-width="1"/>
<line x1="46" y1="364.2" x2="721.0" y2="364.2" stroke="#000" stroke-opacity="0.08" stroke-width="1"/>
<line x1="46" y1="349.4" x2="721.0" y2="349.4" stroke="#000" stroke-opacity="0.08" stroke-width="1"/>
<line x1="135.8" y1="349.4" x2="135.8" y2="557" stroke="#000" stroke-opacity="0.08" stroke-width="1"/>
<line x1="252.1" y1="349.4" x2="252.1" y2="557" stroke="#000" stroke-opacity="0.08" stroke-width="1"/>
<line x1="364.6" y1="349.4" x2="364.6" y2="557" stroke="#000" stroke-opacity="0.08" stroke-width="1"/>
<line x1="480.8" y1="349.4" x2="480.8" y2="557" stroke="#000" stroke-opacity="0.08" stroke-width="1"/>
<line x1="593.3" y1="349.4" x2="593.3" y2="557" stroke="#000" stroke-opacity="0.08" stroke-width="1"/>
<line x1="709.5" y1="349.4" x2="709.5" y2="557" stroke="#000" stroke-opacity="0.08" stroke-width="1"/>
<line x1="721.0" y1="349.4" x2="721.0" y2="557" stroke="#000" stroke-opacity="0.08" stroke-width="1"/>
<line x1="45.5" y1="349.4" x2="45.5" y2="560.5" stroke="#c8c8c8" stroke-width="1"/>
<line x1="45.9" y1="557.4" x2="721.0" y2="557.4" stroke="#aaaaaa" stroke-width="1"/>
<line x1="49.5" y1="349.4" x2="49.5" y2="557.4" stroke="#666666" stroke-width="1"/>
<line x1="42" y1="349.4" x2="46" y2="349.4" stroke="#555" stroke-width="1"/>
<line x1="49.3" y1="360.0" x2="721.0" y2="360.0" stroke="#d383d0" stroke-width="2"/>
<line x1="49.3" y1="541.5" x2="721.0" y2="541.5" stroke="#6fc67c" stroke-width="2"/>
<path d="M49.3,557.10 L51.3,557.10 L53.3,557.10 L55.3,557.10 L57.3,557.10 L59.3,557.10 L61.3,557.10 L63.3,557.10 L65.3,557.10 L67.3,557.10 L69.3,557.10 L71.3,557.10 L73.3,557.09 L75.3,557.09 L77.3,557.09 L79.3,557.09 L81.3,557.09 L83.3,557.09 L85.3,557.09 L87.3,557.09 L89.3,557.08 L91.3,557.08 L93.3,557.08 L95.3,557.08 L97.3,557.08 L99.3,557.07 L101.3,557.07 L103.3,557.07 L105.3,557.07 L107.3,557.06 L109.3,557.06 L111.3,557.06 L113.3,557.06 L115.3,557.05 L117.3,557.05 L119.3,557.05 L121.3,557.04 L123.3,557.04 L125.3,557.03 L127.3,557.03 L129.3,557.03 L131.3,557.02 L133.3,557.02 L135.3,557.01 L137.3,557.01 L139.3,557.00 L141.3,556.99 L143.3,556.97 L145.3,556.93 L147.3,556.87 L149.3,556.80 L151.3,556.72 L153.3,556.63 L155.3,556.53 L157.3,556.43 L159.3,556.32 L161.3,556.21 L163.3,556.10 L165.3,555.98 L167.3,555.86 L169.3,555.72 L171.3,555.57 L173.3,555.40 L175.3,555.22 L177.3,555.03 L179.3,554.83 L181.3,554.62 L183.3,554.40 L185.3,554.17 L187.3,553.93 L189.3,553.69 L191.3,553.44 L193.3,553.17 L195.3,552.89 L197.3,552.60 L199.3,552.28 L201.3,551.95 L203.3,551.60 L205.3,551.23 L207.3,550.84 L209.3,550.43 L211.3,549.99 L213.3,549.53 L215.3,549.01 L217.3,548.43 L219.3,547.79 L221.3,547.10 L223.3,546.36 L225.3,545.60 L227.3,544.81 L229.3,544.00 L231.3,543.19 L233.3,542.38 L235.3,541.58 L237.3,540.78 L239.3,539.98 L241.3,539.16 L243.3,538.32 L245.3,537.47 L247.3,536.60 L249.3,535.72 L251.3,534.82 L253.3,533.91 L255.3,532.99 L257.3,532.04 L259.3,531.08 L261.3,530.09 L263.3,529.09 L265.3,528.06 L267.3,527.03 L269.3,525.98 L271.3,524.92 L273.3,523.45 L275.3,522.34 L277.3,521.21 L279.3,520.08 L281.3,518.93 L283.3,517.76 L285.3,516.59 L287.3,515.40 L289.3,514.21 L291.3,513.01 L293.3,511.80 L295.3,510.59 L297.3,509.37 L299.3,508.16 L301.3,506.94 L303.3,505.72 L305.3,504.50 L307.3,503.29 L309.3,502.08 L311.3,500.88 L313.3,499.69 L315.3,498.51 L317.3,497.34 L319.3,496.18 L321.3,495.04 L323.3,493.91 L325.3,492.80 L327.3,491.72 L329.3,490.65 L331.3,489.61 L333.3,488.59 L335.3,487.60 L337.3,486.64 L339.3,485.70 L341.3,484.80 L343.3,483.93 L345.3,483.10 L347.3,482.30 L349.3,481.53 L351.3,480.81 L353.3,480.12 L355.3,479.48 L357.3,478.88 L359.3,478.32 L361.3,477.80 L363.3,477.33 L365.3,476.90 L367.3,476.52 L369.3,476.19 L371.3,475.90 L373.3,475.67 L375.3,475.48 L377.3,475.34 L379.3,475.24 L381.3,475.20 L383.3,475.21 L385.3,475.27 L387.3,475.38 L389.3,475.54 L391.3,475.76 L393.3,476.02 L395.3,476.34 L397.3,476.70 L399.3,477.12 L401.3,477.58 L403.3,478.09 L405.3,478.64 L407.3,479.24 L409.3,479.89 L411.3,480.58 L413.3,481.31 L415.3,482.08 L417.3,482.89 L419.3,483.74 L421.3,484.62 L423.3,485.54 L425.3,486.49 L427.3,487.47 L429.3,488.49 L431.3,489.53 L433.3,490.59 L435.3,491.68 L437.3,492.80 L439.3,493.93 L441.3,495.09 L443.3,496.26 L445.3,497.45 L447.3,498.65 L449.3,499.86 L451.3,501.09 L453.3,502.32 L455.3,503.56 L457.3,504.80 L459.3,506.05 L461.3,507.30 L463.3,508.55 L465.3,509.80 L467.3,511.04 L469.3,512.28 L471.3,513.52 L473.3,514.75 L475.3,515.97 L477.3,517.17 L479.3,518.37 L481.3,519.56 L483.3,520.73 L485.3,521.89 L487.3,523.03 L489.3,524.16 L491.3,525.27 L493.3,526.36 L495.3,527.44 L497.3,528.49 L499.3,529.52 L501.3,530.54 L503.3,531.53 L505.3,532.50 L507.3,533.45 L509.3,534.37 L511.3,535.28 L513.3,536.16 L515.3,537.02 L517.3,537.85 L519.3,538.67 L521.3,539.46 L523.3,540.22 L525.3,540.97 L527.3,541.69 L529.3,542.38 L531.3,543.06 L533.3,543.71 L535.3,544.34 L537.3,544.95 L539.3,545.53 L541.3,546.10 L543.3,546.64 L545.3,547.17 L547.3,547.67 L549.3,548.15 L551.3,548.62 L553.3,549.06 L555.3,549.49 L557.3,549.90 L559.3,550.29 L561.3,550.66 L563.3,551.02 L565.3,551.36 L567.3,551.69 L569.3,552.00 L571.3,552.29 L573.3,552.57 L575.3,552.84 L577.3,553.09 L579.3,553.33 L581.3,553.56 L583.3,553.78 L585.3,553.99 L587.3,554.18 L589.3,554.37 L591.3,554.54 L593.3,554.70 L595.3,554.86 L597.3,555.01 L599.3,555.15 L601.3,555.28 L603.3,555.40 L605.3,555.51 L607.3,555.62 L609.3,555.73 L611.3,555.82 L613.3,555.91 L615.3,556.00 L617.3,556.07 L619.3,556.15 L621.3,556.22 L623.3,556.28 L625.3,556.34 L627.3,556.40 L629.3,556.45 L631.3,556.50 L633.3,556.55 L635.3,556.59 L637.3,556.63 L639.3,556.66 L641.3,556.70 L643.3,556.73 L645.3,556.76 L647.3,556.79 L649.3,556.81 L651.3,556.84 L653.3,556.86 L655.3,556.88 L657.3,556.90 L659.3,556.91 L661.3,556.93 L663.3,556.94 L665.3,556.96 L667.3,556.97 L669.3,556.98 L671.3,556.99 L673.3,557.00 L675.3,557.01 L677.3,557.02 L679.3,557.02 L681.3,557.03 L683.3,557.04 L685.3,557.04 L687.3,557.05 L689.3,557.05 L691.3,557.06 L693.3,557.06 L695.3,557.07 L697.3,557.07 L699.3,557.07 L701.3,557.07 L703.3,557.08 L705.3,557.08 L707.3,557.08 L709.3,557.08 L711.3,557.08 L713.3,557.09 L715.3,557.09 L717.3,557.09 L719.3,557.09 L721.0,557.09" fill="none" stroke="#800080" stroke-width="2" stroke-dasharray="3.3,2.84" stroke-dashoffset="3.50" transform="translate(0,-0.5)"/>
<path d="M49.3,557.10 L51.3,557.10 L53.3,557.10 L55.3,557.10 L57.3,557.09 L59.3,557.09 L61.3,557.09 L63.3,557.09 L65.3,557.09 L67.3,557.09 L69.3,557.09 L71.3,557.09 L73.3,557.09 L75.3,557.09 L77.3,557.09 L79.3,557.09 L81.3,557.08 L83.3,557.08 L85.3,557.08 L87.3,557.08 L89.3,557.08 L91.3,557.07 L93.3,557.07 L95.3,557.07 L97.3,557.07 L99.3,557.06 L101.3,557.06 L103.3,557.06 L105.3,557.05 L107.3,557.05 L109.3,557.04 L111.3,557.04 L113.3,557.04 L115.3,557.03 L117.3,557.02 L119.3,557.02 L121.3,557.01 L123.3,557.00 L125.3,557.00 L127.3,556.99 L129.3,556.98 L131.3,556.97 L133.3,556.96 L135.3,556.95 L137.3,556.94 L139.3,556.92 L141.3,556.91 L143.3,556.90 L145.3,556.88 L147.3,556.87 L149.3,556.85 L151.3,556.83 L153.3,556.81 L155.3,556.79 L157.3,556.77 L159.3,556.75 L161.3,556.72 L163.3,556.70 L165.3,556.67 L167.3,556.64 L169.3,556.61 L171.3,556.58 L173.3,556.55 L175.3,556.51 L177.3,556.47 L179.3,556.43 L181.3,556.39 L183.3,556.35 L185.3,556.31 L187.3,556.26 L189.3,556.21 L191.3,556.16 L193.3,556.10 L195.3,556.04 L197.3,555.99 L199.3,555.92 L201.3,555.86 L203.3,555.79 L205.3,555.72 L207.3,555.65 L209.3,555.57 L211.3,555.49 L213.3,555.41 L215.3,555.32 L217.3,555.23 L219.3,555.14 L221.3,555.05 L223.3,554.95 L225.3,554.85 L227.3,554.74 L229.3,554.63 L231.3,554.52 L233.3,554.41 L235.3,554.29 L237.3,554.17 L239.3,554.04 L241.3,553.91 L243.3,553.78 L245.3,553.65 L247.3,553.51 L249.3,553.37 L251.3,553.22 L253.3,553.08 L255.3,552.92 L257.3,552.77 L259.3,552.61 L261.3,552.45 L263.3,552.29 L265.3,552.13 L267.3,551.96 L269.3,551.79 L271.3,551.62 L273.3,551.45 L275.3,551.27 L277.3,551.10 L279.3,550.92 L281.3,550.74 L283.3,550.56 L285.3,550.37 L287.3,550.19 L289.3,550.01 L291.3,549.83 L293.3,549.64 L295.3,549.46 L297.3,549.28 L299.3,549.09 L301.3,548.91 L303.3,548.73 L305.3,548.55 L307.3,548.38 L309.3,548.20 L311.3,548.03 L313.3,547.86 L315.3,547.69 L317.3,547.52 L319.3,547.36 L321.3,547.20 L323.3,547.05 L325.3,546.90 L327.3,546.75 L329.3,546.61 L331.3,546.47 L333.3,546.34 L335.3,546.21 L337.3,546.09 L339.3,545.97 L341.3,545.86 L343.3,545.75 L345.3,545.66 L347.3,545.56 L349.3,545.48 L351.3,545.40 L353.3,545.33 L355.3,545.26 L357.3,545.20 L359.3,545.15 L361.3,545.11 L363.3,545.07 L365.3,545.04 L367.3,545.02 L369.3,545.01 L371.3,545.00 L373.3,545.00 L375.3,545.01 L377.3,545.03 L379.3,545.06 L381.3,545.10 L383.3,545.15 L385.3,545.20 L387.3,545.27 L389.3,545.34 L391.3,545.43 L393.3,545.52 L395.3,545.62 L397.3,545.72 L399.3,545.84 L401.3,545.96 L403.3,546.09 L405.3,546.23 L407.3,546.37 L409.3,546.52 L411.3,546.67 L413.3,546.84 L415.3,547.00 L417.3,547.17 L419.3,547.35 L421.3,547.53 L423.3,547.71 L425.3,547.90 L427.3,548.09 L429.3,548.28 L431.3,548.48 L433.3,548.68 L435.3,548.88 L437.3,549.08 L439.3,549.28 L441.3,549.49 L443.3,549.69 L445.3,549.89 L447.3,550.10 L449.3,550.30 L451.3,550.50 L453.3,550.70 L455.3,550.90 L457.3,551.10 L459.3,551.30 L461.3,551.49 L463.3,551.68 L465.3,551.87 L467.3,552.06 L469.3,552.24 L471.3,552.43 L473.3,552.60 L475.3,552.78 L477.3,552.95 L479.3,553.11 L481.3,553.28 L483.3,553.44 L485.3,553.59 L487.3,553.74 L489.3,553.89 L491.3,554.03 L493.3,554.17 L495.3,554.31 L497.3,554.44 L499.3,554.56 L501.3,554.69 L503.3,554.81 L505.3,554.92 L507.3,555.03 L509.3,555.14 L511.3,555.24 L513.3,555.34 L515.3,555.43 L517.3,555.52 L519.3,555.61 L521.3,555.69 L523.3,555.77 L525.3,555.85 L527.3,555.92 L529.3,555.99 L531.3,556.05 L533.3,556.12 L535.3,556.18 L537.3,556.23 L539.3,556.29 L541.3,556.34 L543.3,556.39 L545.3,556.43 L547.3,556.48 L549.3,556.52 L551.3,556.56 L553.3,556.59 L555.3,556.63 L557.3,556.66 L559.3,556.69 L561.3,556.72 L563.3,556.75 L565.3,556.77 L567.3,556.79 L569.3,556.82 L571.3,556.84 L573.3,556.86 L575.3,556.88 L577.3,556.89 L579.3,556.91 L581.3,556.92 L583.3,556.94 L585.3,556.95 L587.3,556.96 L589.3,556.97 L591.3,556.98 L593.3,556.99 L595.3,557.00 L597.3,557.01 L599.3,557.02 L601.3,557.02 L603.3,557.03 L605.3,557.04 L607.3,557.04 L609.3,557.05 L611.3,557.05 L613.3,557.06 L615.3,557.06 L617.3,557.06 L619.3,557.07 L621.3,557.07 L623.3,557.07 L625.3,557.08 L627.3,557.08 L629.3,557.08 L631.3,557.08 L633.3,557.08 L635.3,557.08 L637.3,557.09 L639.3,557.09 L641.3,557.09 L643.3,557.09 L645.3,557.09 L647.3,557.09 L649.3,557.09 L651.3,557.09 L653.3,557.09 L655.3,557.09 L657.3,557.10 L659.3,557.10 L661.3,557.10 L663.3,557.10 L665.3,557.10 L667.3,557.10 L669.3,557.10 L671.3,557.10 L673.3,557.10 L675.3,557.10 L677.3,557.10 L679.3,557.10 L681.3,557.10 L683.3,557.10 L685.3,557.10 L687.3,557.10 L689.3,557.10 L691.3,557.10 L693.3,557.10 L695.3,557.10 L697.3,557.10 L699.3,557.10 L701.3,557.10 L703.3,557.10 L705.3,557.10 L707.3,557.10 L709.3,557.10 L711.3,557.10 L713.3,557.10 L715.3,557.10 L717.3,557.10 L719.3,557.10 L721.0,557.10" fill="none" stroke="#008000" stroke-width="1.8" stroke-dasharray="3.3,2.84" stroke-dashoffset="3.66" transform="translate(0,-0.5)"/>
<path d="M49.3,557.09 L51.3,557.09 L53.3,557.09 L55.3,557.09 L57.3,557.09 L59.3,557.09 L61.3,557.09 L63.3,557.09 L65.3,557.09 L67.3,557.08 L69.3,557.08 L71.3,557.08 L73.3,557.08 L75.3,557.08 L77.3,557.08 L79.3,557.07 L81.3,557.07 L83.3,557.07 L85.3,557.07 L87.3,557.06 L89.3,557.06 L91.3,557.06 L93.3,557.06 L95.3,557.05 L97.3,557.05 L99.3,557.04 L101.3,557.04 L103.3,557.03 L105.3,557.03 L107.3,557.02 L109.3,557.02 L111.3,557.01 L113.3,557.01 L115.3,557.00 L117.3,556.99 L119.3,556.98 L121.3,556.97 L123.3,556.97 L125.3,556.96 L127.3,556.95 L129.3,556.94 L131.3,556.92 L133.3,556.91 L135.3,556.90 L137.3,556.89 L139.3,556.87 L141.3,556.86 L143.3,556.84 L145.3,556.82 L147.3,556.80 L149.3,556.79 L151.3,556.77 L153.3,556.75 L155.3,556.72 L157.3,556.70 L159.3,556.68 L161.3,556.65 L163.3,556.62 L165.3,556.59 L167.3,556.57 L169.3,556.53 L171.3,556.50 L173.3,556.47 L175.3,556.43 L177.3,556.39 L179.3,556.36 L181.3,556.32 L183.3,556.27 L185.3,556.23 L187.3,556.18 L189.3,556.14 L191.3,556.09 L193.3,556.03 L195.3,555.98 L197.3,555.92 L199.3,555.87 L201.3,555.81 L203.3,555.74 L205.3,555.68 L207.3,555.61 L209.3,555.54 L211.3,555.47 L213.3,555.40 L215.3,555.32 L217.3,555.24 L219.3,555.16 L221.3,555.08 L223.3,555.00 L225.3,554.91 L227.3,554.82 L229.3,554.73 L231.3,554.63 L233.3,554.53 L235.3,554.43 L237.3,554.33 L239.3,554.23 L241.3,554.12 L243.3,554.01 L245.3,553.90 L247.3,553.79 L249.3,553.67 L251.3,553.55 L253.3,553.43 L255.3,553.31 L257.3,553.19 L259.3,553.06 L261.3,552.94 L263.3,552.81 L265.3,552.68 L267.3,552.55 L269.3,552.42 L271.3,552.28 L273.3,552.15 L275.3,552.01 L277.3,551.87 L279.3,551.74 L281.3,551.60 L283.3,551.46 L285.3,551.32 L287.3,551.18 L289.3,551.05 L291.3,550.91 L293.3,550.77 L295.3,550.63 L297.3,550.49 L299.3,550.36 L301.3,550.22 L303.3,550.09 L305.3,549.96 L307.3,549.82 L309.3,549.70 L311.3,549.57 L313.3,549.44 L315.3,549.32 L317.3,549.20 L319.3,549.08 L321.3,548.96 L323.3,548.85 L325.3,548.74 L327.3,548.64 L329.3,548.53 L331.3,548.43 L333.3,548.34 L335.3,548.25 L337.3,548.16 L339.3,548.07 L341.3,547.99 L343.3,547.92 L345.3,547.85 L347.3,547.78 L349.3,547.72 L351.3,547.66 L353.3,547.61 L355.3,547.57 L357.3,547.52 L359.3,547.49 L361.3,547.46 L363.3,547.43 L365.3,547.41 L367.3,547.39 L369.3,547.38 L371.3,547.38 L373.3,547.38 L375.3,547.39 L377.3,547.41 L379.3,547.43 L381.3,547.46 L383.3,547.50 L385.3,547.54 L387.3,547.59 L389.3,547.65 L391.3,547.71 L393.3,547.79 L395.3,547.86 L397.3,547.95 L399.3,548.04 L401.3,548.13 L403.3,548.23 L405.3,548.34 L407.3,548.45 L409.3,548.57 L411.3,548.69 L413.3,548.82 L415.3,548.95 L417.3,549.08 L419.3,549.22 L421.3,549.36 L423.3,549.51 L425.3,549.65 L427.3,549.80 L429.3,549.96 L431.3,550.11 L433.3,550.27 L435.3,550.43 L437.3,550.59 L439.3,550.75 L441.3,550.91 L443.3,551.07 L445.3,551.23 L447.3,551.39 L449.3,551.55 L451.3,551.71 L453.3,551.87 L455.3,552.03 L457.3,552.19 L459.3,552.35 L461.3,552.50 L463.3,552.65 L465.3,552.81 L467.3,552.95 L469.3,553.10 L471.3,553.25 L473.3,553.39 L475.3,553.53 L477.3,553.67 L479.3,553.80 L481.3,553.93 L483.3,554.06 L485.3,554.19 L487.3,554.31 L489.3,554.43 L491.3,554.54 L493.3,554.66 L495.3,554.77 L497.3,554.87 L499.3,554.98 L501.3,555.08 L503.3,555.17 L505.3,555.27 L507.3,555.36 L509.3,555.44 L511.3,555.53 L513.3,555.61 L515.3,555.68 L517.3,555.76 L519.3,555.83 L521.3,555.90 L523.3,555.97 L525.3,556.03 L527.3,556.09 L529.3,556.15 L531.3,556.20 L533.3,556.25 L535.3,556.30 L537.3,556.35 L539.3,556.40 L541.3,556.44 L543.3,556.48 L545.3,556.52 L547.3,556.56 L549.3,556.59 L551.3,556.62 L553.3,556.66 L555.3,556.68 L557.3,556.71 L559.3,556.74 L561.3,556.76 L563.3,556.79 L565.3,556.81 L567.3,556.83 L569.3,556.85 L571.3,556.87 L573.3,556.88 L575.3,556.90 L577.3,556.91 L579.3,556.93 L581.3,556.94 L583.3,556.95 L585.3,556.96 L587.3,556.97 L589.3,556.98 L591.3,556.99 L593.3,557.00 L595.3,557.01 L597.3,557.02 L599.3,557.02 L601.3,557.03 L603.3,557.04 L605.3,557.04 L607.3,557.05 L609.3,557.05 L611.3,557.05 L613.3,557.06 L615.3,557.06 L617.3,557.07 L619.3,557.07 L621.3,557.07 L623.3,557.07 L625.3,557.08 L627.3,557.08 L629.3,557.08 L631.3,557.08 L633.3,557.08 L635.3,557.09 L637.3,557.09 L639.3,557.09 L641.3,557.09 L643.3,557.09 L645.3,557.09 L647.3,557.09 L649.3,557.09 L651.3,557.09 L653.3,557.09 L655.3,557.09 L657.3,557.10 L659.3,557.10 L661.3,557.10 L663.3,557.10 L665.3,557.10 L667.3,557.10 L669.3,557.10 L671.3,557.10 L673.3,557.10 L675.3,557.10 L677.3,557.10 L679.3,557.10 L681.3,557.10 L683.3,557.10 L685.3,557.10 L687.3,557.10 L689.3,557.10 L691.3,557.10 L693.3,557.10 L695.3,557.10 L697.3,557.10 L699.3,557.10 L701.3,557.10 L703.3,557.10 L705.3,557.10 L707.3,557.10 L709.3,557.10 L711.3,557.10 L713.3,557.10 L715.3,557.10 L717.3,557.10 L719.3,557.10 L721.0,557.10" fill="none" stroke="#0000ff" stroke-width="1.8" stroke-dasharray="3.3,2.84" stroke-dashoffset="3.50" transform="translate(0,-0.5)"/>
<circle cx="49.3" cy="360.0" r="3.2" fill="#fff" stroke="#d383d0" stroke-width="1.6"/>
<circle cx="49.3" cy="541.5" r="3.2" fill="#fff" stroke="#6fc67c" stroke-width="1.6"/>
<circle cx="49.3" cy="556.6" r="3.2" fill="#fff" stroke="#0000ff" stroke-width="1.8"/>
<line x1="42" y1="557.1" x2="46" y2="557.1" stroke="#d9d9d9" stroke-width="1"/>
<text x="40" y="559.5" text-anchor="end" class="yt">0</text>
<line x1="42" y1="542.3" x2="46" y2="542.3" stroke="#d9d9d9" stroke-width="1"/>
<text x="40" y="544.7" text-anchor="end" class="yt">200</text>
<line x1="42" y1="527.4" x2="46" y2="527.4" stroke="#d9d9d9" stroke-width="1"/>
<text x="40" y="529.8" text-anchor="end" class="yt">400</text>
<line x1="42" y1="512.6" x2="46" y2="512.6" stroke="#d9d9d9" stroke-width="1"/>
<text x="40" y="515.0" text-anchor="end" class="yt">600</text>
<line x1="42" y1="497.8" x2="46" y2="497.8" stroke="#d9d9d9" stroke-width="1"/>
<text x="40" y="500.2" text-anchor="end" class="yt">800</text>
<line x1="42" y1="482.9" x2="46" y2="482.9" stroke="#d9d9d9" stroke-width="1"/>
<text x="40" y="485.3" text-anchor="end" class="yt">1k</text>
<line x1="42" y1="468.1" x2="46" y2="468.1" stroke="#d9d9d9" stroke-width="1"/>
<text x="40" y="470.5" text-anchor="end" class="yt">1.2k</text>
<line x1="42" y1="453.2" x2="46" y2="453.2" stroke="#d9d9d9" stroke-width="1"/>
<text x="40" y="455.6" text-anchor="end" class="yt">1.4k</text>
<line x1="42" y1="438.4" x2="46" y2="438.4" stroke="#d9d9d9" stroke-width="1"/>
<text x="40" y="440.8" text-anchor="end" class="yt">1.6k</text>
<line x1="42" y1="423.6" x2="46" y2="423.6" stroke="#d9d9d9" stroke-width="1"/>
<text x="40" y="426.0" text-anchor="end" class="yt">1.8k</text>
<line x1="42" y1="408.7" x2="46" y2="408.7" stroke="#d9d9d9" stroke-width="1"/>
<text x="40" y="411.1" text-anchor="end" class="yt">2k</text>
<line x1="42" y1="393.9" x2="46" y2="393.9" stroke="#d9d9d9" stroke-width="1"/>
<text x="40" y="396.3" text-anchor="end" class="yt">2.2k</text>
<line x1="42" y1="379.1" x2="46" y2="379.1" stroke="#d9d9d9" stroke-width="1"/>
<text x="40" y="381.5" text-anchor="end" class="yt">2.4k</text>
<line x1="42" y1="364.2" x2="46" y2="364.2" stroke="#d9d9d9" stroke-width="1"/>
<text x="40" y="366.6" text-anchor="end" class="yt">2.6k</text>
<text x="40" y="351.8" text-anchor="end" class="yt">2.8k</text>
<line x1="135.8" y1="557.4" x2="135.8" y2="560.7" stroke="#aaa" stroke-width="1"/>
<line x1="252.1" y1="557.4" x2="252.1" y2="560.7" stroke="#aaa" stroke-width="1"/>
<line x1="364.6" y1="557.4" x2="364.6" y2="560.7" stroke="#aaa" stroke-width="1"/>
<line x1="480.8" y1="557.4" x2="480.8" y2="560.7" stroke="#aaa" stroke-width="1"/>
<line x1="593.3" y1="557.4" x2="593.3" y2="560.7" stroke="#aaa" stroke-width="1"/>
<line x1="709.5" y1="557.4" x2="709.5" y2="560.7" stroke="#aaa" stroke-width="1"/>
<text x="0" y="0" transform="translate(18,493.2) rotate(-90)" class="al" textLength="60.5" lengthAdjust="spacingAndGlyphs">Resource count</text>
<line x1="67.7" y1="595.8" x2="85.7" y2="595.8" stroke="#d383d0" stroke-width="2"/>
<line x1="205.7" y1="595.8" x2="224.8" y2="595.8" stroke="#800080" stroke-width="2.2" stroke-dasharray="6,7"/>
<line x1="385.9" y1="595.8" x2="404.1" y2="595.8" stroke="#6fc67c" stroke-width="2"/>
<line x1="527.7" y1="595.8" x2="547" y2="595.8" stroke="#008000" stroke-width="2.2" stroke-dasharray="6,7"/>
<line x1="278.1" y1="614.1" x2="297.1" y2="614.1" stroke="#0000ff" stroke-width="2.2" stroke-dasharray="6,7"/>
<text x="335.22" y="20.30" font-size="13.6" fill="#fff" textLength="53.38" lengthAdjust="spacingAndGlyphs">Oregon</text>
<text x="223.17" y="65.70" font-size="15" fill="#2c2c2e" textLength="275.93" lengthAdjust="spacingAndGlyphs">Government-mandated social distancing</text>
<text x="41.74" y="119.00" font-size="15" font-weight="bold" fill="#636366" stroke="#636366" stroke-width="0.4" textLength="112.99" lengthAdjust="spacingAndGlyphs">March 23, 2020</text>
<text x="54.18" y="136.90" font-size="9.9" fill="#3a3a3c" textLength="85.50" lengthAdjust="spacingAndGlyphs">Stay at home order</text>
<text x="223.14" y="119.00" font-size="15" font-weight="bold" fill="#636366" stroke="#636366" stroke-width="0.4" textLength="112.79" lengthAdjust="spacingAndGlyphs">March 16, 2020</text>
<text x="216.57" y="136.90" font-size="9.9" fill="#3a3a3c" textLength="124.72" lengthAdjust="spacingAndGlyphs">Educational facilities closed</text>
<text x="398.06" y="119.00" font-size="15" font-weight="bold" fill="#636366" stroke="#636366" stroke-width="0.4" textLength="126.96" lengthAdjust="spacingAndGlyphs">Not implemented</text>
<text x="394.08" y="136.90" font-size="9.9" fill="#3a3a3c" textLength="132.77" lengthAdjust="spacingAndGlyphs">Non-essential services closed</text>
<text x="580.06" y="119.00" font-size="15" font-weight="bold" fill="#636366" stroke="#636366" stroke-width="0.4" textLength="126.96" lengthAdjust="spacingAndGlyphs">Not implemented</text>
<text x="593.30" y="136.90" font-size="9.9" fill="#3a3a3c" textLength="98.78" lengthAdjust="spacingAndGlyphs">Travel severely limited</text>
<text x="289.20" y="182.90" font-size="15" fill="#2c2c2e" textLength="144.57" lengthAdjust="spacingAndGlyphs">Hospital resource use</text>
<text x="101.80" y="245.00" font-size="10.8" fill="#3a3a3c" textLength="174.39" lengthAdjust="spacingAndGlyphs"><tspan font-weight="bold" fill="#555" font-size="11">36</tspan> <tspan font-weight="bold" font-size="9.5" fill="#555">days</tspan> until peak resource use on</text>
<text x="143.96" y="266.40" font-size="15.5" font-weight="bold" fill="#636366" stroke="#636366" stroke-width="0.4" textLength="89.84" lengthAdjust="spacingAndGlyphs">May 6, 2020</text>
<text x="434.48" y="207.00" font-size="9" fill="#2c2c2e" textLength="233.06" lengthAdjust="spacingAndGlyphs">Resources needed for COVID patients on peak date</text>
<text x="392.90" y="223.80" font-size="7.7" fill="#3a3a3c" textLength="55.14" lengthAdjust="spacingAndGlyphs">All beds needed</text>
<text x="527.10" y="223.80" font-size="7.7" fill="#3a3a3c" textLength="59.05" lengthAdjust="spacingAndGlyphs">All beds available</text>
<text x="664.10" y="223.80" font-size="7.7" fill="#3a3a3c" textLength="45.63" lengthAdjust="spacingAndGlyphs">Bed shortage</text>
<text x="389.38" y="259.80" font-size="7.7" fill="#3a3a3c" textLength="61.29" lengthAdjust="spacingAndGlyphs">ICU beds needed</text>
<text x="519.00" y="259.80" font-size="7.7" fill="#3a3a3c" textLength="64.43" lengthAdjust="spacingAndGlyphs">ICU beds available</text>
<text x="651.89" y="259.80" font-size="7.7" fill="#3a3a3c" textLength="60.98" lengthAdjust="spacingAndGlyphs">ICU bed shortage</text>
<text x="504.81" y="295.10" font-size="7.7" fill="#3a3a3c" textLength="92.67" lengthAdjust="spacingAndGlyphs">Invasive ventilators needed</text>
<text x="398.00" y="237.10" font-size="9.8" font-weight="bold" fill="#8b008b" stroke="#8b008b" stroke-width="0.3" textLength="27.80" lengthAdjust="spacingAndGlyphs">1,097</text>
<text x="429.00" y="237.10" font-size="7.4" font-weight="bold" fill="#8b008b" stroke="#8b008b" stroke-width="0.2" textLength="17.35" lengthAdjust="spacingAndGlyphs">beds</text>
<text x="534.10" y="237.10" font-size="9.8" font-weight="bold" fill="#c878c8" stroke="#c878c8" stroke-width="0.3" textLength="28.21" lengthAdjust="spacingAndGlyphs">2,657</text>
<text x="565.00" y="237.10" font-size="7.4" font-weight="bold" fill="#c878c8" stroke="#c878c8" stroke-width="0.2" textLength="17.25" lengthAdjust="spacingAndGlyphs">beds</text>
<text x="675.90" y="237.10" font-size="9.8" font-weight="bold" fill="#555" stroke="#555" stroke-width="0.3" textLength="6.33" lengthAdjust="spacingAndGlyphs">0</text>
<text x="684.90" y="237.10" font-size="7.4" font-weight="bold" fill="#555" stroke="#555" stroke-width="0.2" textLength="17.35" lengthAdjust="spacingAndGlyphs">beds</text>
<text x="402.40" y="273.10" font-size="9.8" font-weight="bold" fill="#008000" stroke="#008000" stroke-width="0.3" textLength="18.40" lengthAdjust="spacingAndGlyphs">163</text>
<text x="423.40" y="273.10" font-size="7.4" font-weight="bold" fill="#008000" stroke="#008000" stroke-width="0.2" textLength="17.86" lengthAdjust="spacingAndGlyphs">beds</text>
<text x="533.30" y="273.10" font-size="9.8" font-weight="bold" fill="#5cb86c" stroke="#5cb86c" stroke-width="0.3" textLength="19.12" lengthAdjust="spacingAndGlyphs">210</text>
<text x="555.00" y="273.10" font-size="7.4" font-weight="bold" fill="#5cb86c" stroke="#5cb86c" stroke-width="0.2" textLength="17.25" lengthAdjust="spacingAndGlyphs">beds</text>
<text x="670.90" y="273.10" font-size="9.8" font-weight="bold" fill="#555" stroke="#555" stroke-width="0.3" textLength="6.33" lengthAdjust="spacingAndGlyphs">0</text>
<text x="679.70" y="273.10" font-size="7.4" font-weight="bold" fill="#555" stroke="#555" stroke-width="0.2" textLength="17.55" lengthAdjust="spacingAndGlyphs">beds</text>
<text x="523.20" y="308.80" font-size="9.8" font-weight="bold" fill="#0000ee" stroke="#0000ee" stroke-width="0.3" textLength="16.94" lengthAdjust="spacingAndGlyphs">131</text>
<text x="544.80" y="308.80" font-size="7.4" font-weight="bold" fill="#0000ee" stroke="#0000ee" stroke-width="0.2" textLength="37.90" lengthAdjust="spacingAndGlyphs">ventilators</text>
<text x="258.80" y="334.70" font-size="8" fill="#fff" textLength="43.43" lengthAdjust="spacingAndGlyphs">All resources</text>
<text x="321.00" y="334.70" font-size="8" fill="#333" textLength="27.45" lengthAdjust="spacingAndGlyphs">All beds</text>
<text x="366.32" y="334.70" font-size="8" fill="#333" textLength="32.84" lengthAdjust="spacingAndGlyphs">ICU beds</text>
<text x="416.75" y="334.70" font-size="8" fill="#333" textLength="64.38" lengthAdjust="spacingAndGlyphs">Invasive ventilators</text>
<text x="95.90" y="598.80" font-size="8.6" fill="#333" textLength="71.25" lengthAdjust="spacingAndGlyphs">All beds available</text>
<text x="234.70" y="598.80" font-size="8.6" fill="#333" textLength="111.62" lengthAdjust="spacingAndGlyphs">All beds needed (projected)</text>
<text x="413.46" y="598.80" font-size="8.6" fill="#333" textLength="74.99" lengthAdjust="spacingAndGlyphs">ICU beds available</text>
<text x="555.95" y="598.80" font-size="8.6" fill="#333" textLength="116.33" lengthAdjust="spacingAndGlyphs">ICU beds needed (projected)</text>
<text x="306.05" y="617.10" font-size="8.6" fill="#333" textLength="155.70" lengthAdjust="spacingAndGlyphs">Invasive ventilators needed (projected)</text>
<text x="353.40" y="567.60" font-size="7" fill="#333" textLength="22.97" lengthAdjust="spacingAndGlyphs">May 01</text>
<text x="124.80" y="567.60" font-size="7" fill="#333" textLength="22.42" lengthAdjust="spacingAndGlyphs">Mar 01</text>
<text x="241.80" y="567.60" font-size="7" fill="#333" textLength="20.83" lengthAdjust="spacingAndGlyphs">Apr 01</text>
<text x="470.50" y="567.60" font-size="7" fill="#333" textLength="20.61" lengthAdjust="spacingAndGlyphs">Jun 01</text>
<text x="584.30" y="567.60" font-size="7" fill="#333" textLength="18.79" lengthAdjust="spacingAndGlyphs">Jul 01</text>
<text x="698.40" y="567.60" font-size="7" fill="#333" textLength="22.39" lengthAdjust="spacingAndGlyphs">Aug 01</text>
<text x="362.12" y="581.40" font-size="8.5" fill="#999" textLength="19.34" lengthAdjust="spacingAndGlyphs">Date</text>
</svg>
</body></html>
